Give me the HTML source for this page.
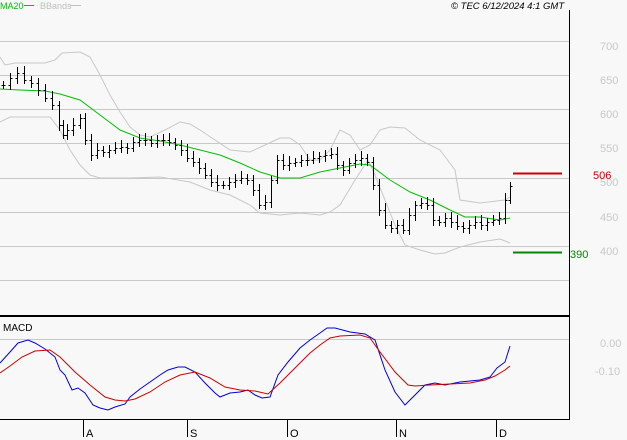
<!DOCTYPE html>
<html><head><meta charset="utf-8"><style>
html,body{margin:0;padding:0;background:#f8f8f8;}
svg{display:block;font-family:"Liberation Sans",sans-serif;}
</style></head><body>
<svg id="s" width="627" height="440" xmlns="http://www.w3.org/2000/svg">
<rect width="627" height="440" fill="#f8f8f8"/>
<g stroke="#c8c8c8" stroke-width="1">
<line x1="0" y1="41.5" x2="569" y2="41.5"/>
<line x1="0" y1="75.5" x2="569" y2="75.5"/>
<line x1="0" y1="109.5" x2="569" y2="109.5"/>
<line x1="0" y1="143.5" x2="569" y2="143.5"/>
<line x1="0" y1="178.5" x2="569" y2="178.5"/>
<line x1="0" y1="212.5" x2="569" y2="212.5"/>
<line x1="0" y1="246.5" x2="569" y2="246.5"/>
<line x1="0" y1="280.5" x2="569" y2="280.5"/>
<line x1="0" y1="339.5" x2="569" y2="339.5"/>
</g>
<g fill="none" stroke="#c8c8c8" stroke-width="1">
<polyline points="0,57 5,65 15,63 45,63 55,60 62,53 80,52 90,57 100,75 110,95 120,112 130,127 140,135 150,137 165,130 180,122 190,124 200,130 215,140 230,150 250,152 265,145 280,138 290,138 300,145 310,160 320,160 330,150 340,130 350,135 360,150 370,145 380,130 390,127 405,128 420,140 440,150 455,170 460,200 480,203 505,200 510,197"/>
<polyline points="0,122 10,117 50,117 60,130 70,150 80,165 90,175 100,178 130,178 160,177 190,182 210,190 230,195 250,205 260,213 280,215 300,213 320,215 330,212 340,205 355,180 368,160 375,175 385,200 395,225 405,245 420,250 435,254 445,253 460,247 468,245 480,242 500,239 510,243"/>
</g>
<polyline fill="none" stroke="#00c000" stroke-width="1" points="0,89 20,90 45,91 60,94 80,100 100,115 120,130 140,138 160,141 180,145 200,150 220,155 240,163 260,172 280,178 300,178 320,172 340,168 360,164 370,165 390,180 410,192 430,200 450,210 465,217 480,217 500,220 510,218"/>
<g id="bars" stroke="#000" stroke-width="1" shape-rendering="crispEdges"></g>
<line x1="513" y1="173.5" x2="562" y2="173.5" stroke="#cc0000" stroke-width="2"/>
<line x1="513" y1="252.5" x2="562" y2="252.5" stroke="#008800" stroke-width="2"/>
<polyline fill="none" stroke="#0000dd" stroke-width="1" points="0,363 10,352 18,343 28,340 35,343 45,349 55,357 60,370 65,375 72,390 78,388 85,393 93,405 100,408 108,410 115,407 125,404 130,397 140,389 150,382 160,375 168,370 178,367 185,367 195,372 205,383 215,393 220,397 230,393 240,392 248,390 255,395 262,398 270,397 278,375 288,362 300,348 310,340 320,333 327,328 335,328 350,332 365,334 375,340 385,370 395,392 405,405 415,395 425,385 435,383 445,385 460,382 480,380 490,377 497,368 505,362 510,346"/>
<polyline fill="none" stroke="#cc0000" stroke-width="1" points="0,373 10,366 22,357 35,351 50,350 60,357 75,372 90,385 105,397 115,400 125,401 135,399 150,392 165,382 180,375 195,372 210,378 225,387 240,390 255,391 268,394 280,383 295,368 310,353 320,345 330,338 340,336 360,335 370,338 380,352 395,372 408,385 415,386 430,385 450,384 470,383 485,380 495,376 505,370 510,366"/>
<line x1="0" y1="316" x2="570" y2="316" stroke="#000" stroke-width="2"/>
<line x1="569.5" y1="10" x2="569.5" y2="420" stroke="#000" stroke-width="1"/>
<line x1="0" y1="419.5" x2="570" y2="419.5" stroke="#000" stroke-width="1"/>
<g stroke="#000" stroke-width="1">
<line x1="83.5" y1="420" x2="83.5" y2="437"/>
<line x1="187.5" y1="420" x2="187.5" y2="437"/>
<line x1="287.5" y1="420" x2="287.5" y2="437"/>
<line x1="396.5" y1="420" x2="396.5" y2="437"/>
<line x1="496.5" y1="420" x2="496.5" y2="437"/>
</g>
<g font-size="11" fill="#000">
<text x="86" y="437">A</text><text x="190" y="437">S</text><text x="290" y="437">O</text><text x="399" y="437">N</text><text x="499" y="437">D</text>
<text x="3" y="331" font-size="10">MACD</text>
<text x="451" y="9" font-size="9.5" font-style="italic">© TEC 6/12/2024 4:1 GMT</text>
</g>
<text x="0" y="9" font-size="9" fill="#00c000">MA20</text>
<line x1="24" y1="5.5" x2="34" y2="5.5" stroke="#00c000"/>
<text x="40" y="9" font-size="9" fill="#c0c0c0">BBands</text>
<line x1="70" y1="5.5" x2="81" y2="5.5" stroke="#c0c0c0"/>
<g font-size="11" fill="#c8c8c8">
<text x="600" y="50">700</text><text x="600" y="84">650</text><text x="600" y="118">600</text><text x="600" y="152">550</text>
<text x="600" y="186">500</text><text x="600" y="221">450</text><text x="600" y="255">400</text>
<text x="600" y="347">0.00</text><text x="595" y="375">-0.10</text>
</g>
<text x="593" y="179" font-size="11" fill="#cc0000">506</text>
<text x="570" y="258" font-size="11" fill="#008800">390</text>
</svg>
<script>
var c=[[3,85],[10,78],[17,73],[24,80],[31,83],[38,90],[45,98],[52,105],[59,125],[63,135],[67,130],[73,125],[80,118],[85,140],[91,155],[97,150],[103,152],[109,150],[115,148],[121,147],[127,148],[133,142],[139,140],[145,140],[151,143],[157,140],[163,140],[169,142],[175,145],[181,150],[187,158],[193,162],[199,168],[205,175],[211,182],[217,185],[223,185],[229,182],[235,180],[241,178],[247,180],[253,190],[259,205],[265,202],[271,180],[277,160],[283,165],[289,163],[295,162],[301,160],[307,160],[313,158],[319,156],[325,155],[331,154],[337,165],[343,170],[349,163],[355,160],[361,158],[367,162],[373,185],[379,210],[385,225],[391,228],[397,225],[403,230],[409,215],[415,205],[421,203],[427,205],[433,220],[439,222],[445,218],[451,222],[457,226],[463,228],[469,225],[475,222],[481,225],[487,222],[493,220],[499,218],[505,200],[510,186]];
var g=document.getElementById('bars'),h='';
for(var i=0;i<c.length;i++){var x=c[i][0]+0.5,y=Math.round(c[i][1]),p=i>0?c[i-1][1]:y,lo=Math.max(y,p)+4+(i%3),hi=Math.min(y,p)-4-(i*5%4);h+='<line x1="'+x+'" y1="'+hi+'" x2="'+x+'" y2="'+lo+'"/><line x1="'+(x-2)+'" y1="'+(p+0.5)+'" x2="'+x+'" y2="'+(p+0.5)+'"/><line x1="'+x+'" y1="'+(y+0.5)+'" x2="'+(x+2)+'" y2="'+(y+0.5)+'"/>';}
g.innerHTML=h;
</script>
</body></html>
